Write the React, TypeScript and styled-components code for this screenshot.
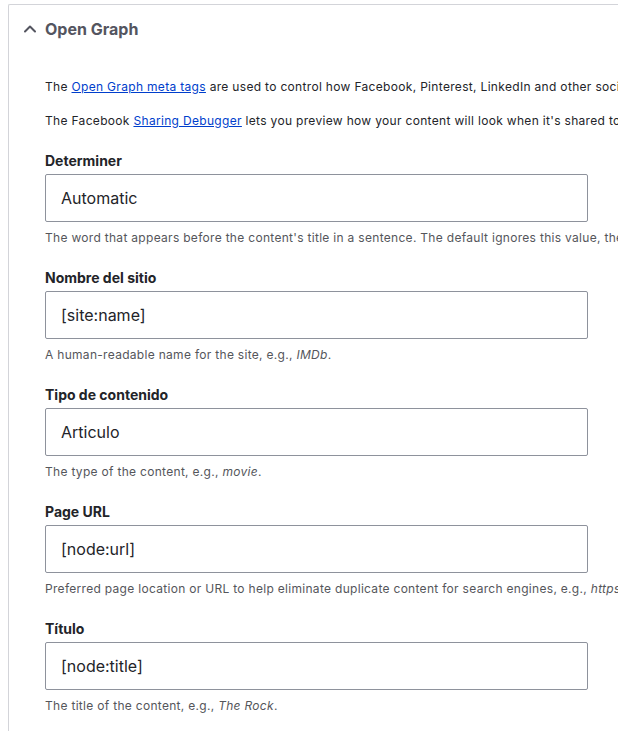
import * as React from 'react'
import styled, { createGlobalStyle } from 'styled-components'

const GlobalStyle = createGlobalStyle`
  html, body {
    margin: 0;
    padding: 0;
    background: #ffffff;
  }
  body {
    font-family: Inter, "Noto Sans", "Liberation Sans", sans-serif;
    color: #232429;
    overflow: hidden;
  }
`

type FieldProps = {
  label: string;
  value: string;
  children: React.ReactNode;
}

const fields: { label: string; value: string; help: React.ReactNode }[] = [
  {
    label: 'Determiner',
    value: 'Automatic',
    help: "The word that appears before the content's title in a sentence. The default ignores this value, the 'Automatic' value should be sufficient if this is actually needed.",
  },
  {
    label: 'Nombre del sitio',
    value: '[site:name]',
    help: <>A human-readable name for the site, e.g., <em>IMDb</em>.</>,
  },
  {
    label: 'Tipo de contenido',
    value: 'Articulo',
    help: <>The type of the content, e.g., <em>movie</em>.</>,
  },
  {
    label: 'Page URL',
    value: '[node:url]',
    help: <>Preferred page location or URL to help eliminate duplicate content for search engines, e.g., <em>https://www.imdb.com/title/tt0117500/</em>.</>,
  },
  {
    label: 'Título',
    value: '[node:title]',
    help: <>The title of the content, e.g., <em>The Rock</em>.</>,
  },
]

const Field = ({ label, value, children }: FieldProps) => (
  <FieldWrap>
    <Label>{label}</Label>
    <Input type="text" defaultValue={value} />
    <Help>{children}</Help>
  </FieldWrap>
)

const ChevronUp = () => (
  <svg width="14" height="14" viewBox="0 0 14 14" fill="none">
    <path d="M2 9.5 L7 4.5 L12 9.5" stroke="#545560" strokeWidth="2" strokeLinecap="round" strokeLinejoin="round" />
  </svg>
)

export default function App() {
  return (
    <>
      <GlobalStyle />
      <Panel>
        <Summary>
          <ChevronUp />
          <SummaryTitle>Open Graph</SummaryTitle>
        </Summary>
        <Body>
          <Intro>
            The <Link href="#">Open Graph meta tags</Link> are used to control how Facebook, Pinterest, LinkedIn and other social networking sites interpret the site's content.
          </Intro>
          <Intro>
            The Facebook <Link href="#">Sharing Debugger</Link> lets you preview how your content will look when it's shared to Facebook.
          </Intro>
          <Fields>
            {fields.map((f) => (
              <Field key={f.label} label={f.label} value={f.value}>
                {f.help}
              </Field>
            ))}
          </Fields>
        </Body>
      </Panel>
    </>
  )
}

const Panel = styled.div`
  margin: 4px 0 0 8px;
  border-top: 1px solid #d3d4d9;
  border-left: 1px solid #d3d4d9;
  border-top-left-radius: 2px;
  height: 740px;
  overflow: hidden;
`

const Summary = styled.div`
  display: flex;
  align-items: center;
  gap: 8px;
  height: 48px;
  padding-left: 14px;
`

const SummaryTitle = styled.span`
  font-size: 16px;
  font-weight: 700;
  color: #545560;
  line-height: 20px;
`

const Body = styled.div`
  padding: 25px 0 0 36px;
`

const Intro = styled.p`
  margin: 0 0 16px;
  font-size: 12px;
  line-height: 18px;
  letter-spacing: 0.32px;
  white-space: nowrap;
  color: #232429;
`

const Link = styled.a`
  color: #003ecc;
  text-decoration: underline;
`

const Fields = styled.div`
  display: flex;
  flex-direction: column;
  gap: 21px;
  margin-top: 21px;
`

const FieldWrap = styled.div`
  display: flex;
  flex-direction: column;
`

const Label = styled.label`
  font-size: 14px;
  font-weight: 700;
  line-height: 20px;
  color: #232429;
  margin-bottom: 3px;
`

const Input = styled.input`
  box-sizing: border-box;
  width: 543px;
  height: 48px;
  padding: 0 15px;
  border: 1px solid #8e929c;
  border-radius: 2px;
  font-family: inherit;
  font-size: 16px;
  color: #232429;
  background: #ffffff;
  outline: none;
`

const Help = styled.div`
  margin-top: 7px;
  font-size: 12px;
  line-height: 18px;
  letter-spacing: 0.3px;
  color: #55565b;
  white-space: nowrap;
`
